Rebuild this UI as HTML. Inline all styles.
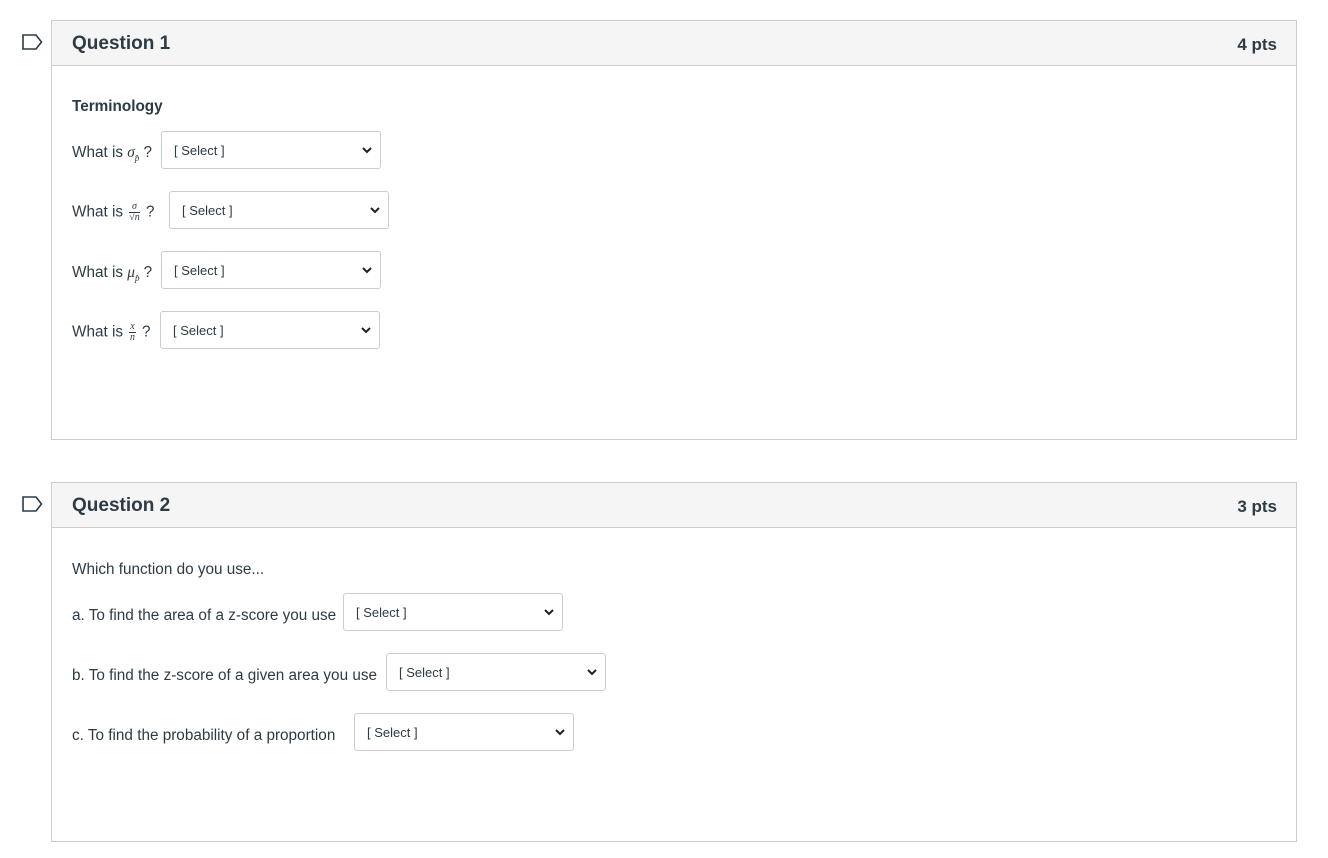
<!DOCTYPE html>
<html><head><meta charset="utf-8"><style>
body{margin:0;background:#fff;font-family:"Liberation Sans",sans-serif;color:#2d3b45;width:1328px;height:858px;position:relative;overflow:hidden}
.q{position:absolute;left:51px;width:1244px;border:1px solid #c7cdd1}
.h{height:44px;background:#f5f5f5;border-bottom:1px solid #c7cdd1;position:relative}
.h .t{position:absolute;left:20px;top:12px;font-size:19px;font-weight:bold}
.h .p{position:absolute;right:19px;top:14px;font-size:17px;font-weight:bold}
.a{position:absolute;font-size:15.3px}
.s{position:absolute;width:218px;height:36px;border:1px solid #c7cdd1;border-radius:3px;background:#fff;font-size:13px;box-sizing:content-box}
.s span{position:absolute;left:12px;top:11px}
.s svg{position:absolute;right:8px;top:15px}
.f{position:absolute;left:22px}
i{font-family:"Liberation Serif",serif}
.fr{display:inline-block;vertical-align:middle;text-align:center;font-family:"Liberation Serif",serif;font-style:italic;font-size:10px;line-height:10px;margin:0 2px}
.fr b{display:block;font-weight:normal;border-bottom:1px solid #2d3b45;padding:0 1px}
</style></head><body>
<svg class="f" style="top:34px" width="21" height="16"><path d="M1 1H14L19.5 8L14 15H1Z" fill="none" stroke="#2d3b45" stroke-width="1.6"/></svg>
<svg class="f" style="top:496px" width="21" height="16"><path d="M1 1H14L19.5 8L14 15H1Z" fill="none" stroke="#2d3b45" stroke-width="1.6"/></svg>

<div class="q" style="top:20px;height:418px"><div class="h"><span class="t">Question 1</span><span class="p">4 pts</span></div></div>
<div class="q" style="top:482px;height:358px"><div class="h"><span class="t">Question 2</span><span class="p">3 pts</span></div></div>

<div class="a" style="left:72px;top:98px;font-weight:bold">Terminology</div>
<div class="a" style="left:72px;top:144px">What is <i>σ<sub style="font-size:9px">p̂</sub></i> ?</div>
<div class="a" style="left:72px;top:202px">What is <span class="fr"><b>σ</b>√n</span> ?</div>
<div class="a" style="left:72px;top:264px">What is <i>μ<sub style="font-size:9px">p̂</sub></i> ?</div>
<div class="a" style="left:72px;top:322px">What is <span class="fr"><b>x</b>n</span> ?</div>

<div class="s" style="left:161px;top:131px"><span>[ Select ]</span><svg width="10" height="7"><path d="M1 1L5 5L9 1" fill="none" stroke="#222" stroke-width="2"/></svg></div>
<div class="s" style="left:169px;top:191px"><span>[ Select ]</span><svg width="10" height="7"><path d="M1 1L5 5L9 1" fill="none" stroke="#222" stroke-width="2"/></svg></div>
<div class="s" style="left:161px;top:251px"><span>[ Select ]</span><svg width="10" height="7"><path d="M1 1L5 5L9 1" fill="none" stroke="#222" stroke-width="2"/></svg></div>
<div class="s" style="left:160px;top:311px"><span>[ Select ]</span><svg width="10" height="7"><path d="M1 1L5 5L9 1" fill="none" stroke="#222" stroke-width="2"/></svg></div>

<div class="a" style="left:72px;top:561px">Which function do you use...</div>
<div class="a" style="left:72px;top:607px">a. To find the area of a z-score you use</div>
<div class="a" style="left:72px;top:667px">b. To find the z-score of a given area you use</div>
<div class="a" style="left:72px;top:727px">c. To find the probability of a proportion</div>
<div class="s" style="left:343px;top:593px"><span>[ Select ]</span><svg width="10" height="7"><path d="M1 1L5 5L9 1" fill="none" stroke="#222" stroke-width="2"/></svg></div>
<div class="s" style="left:386px;top:653px"><span>[ Select ]</span><svg width="10" height="7"><path d="M1 1L5 5L9 1" fill="none" stroke="#222" stroke-width="2"/></svg></div>
<div class="s" style="left:354px;top:713px"><span>[ Select ]</span><svg width="10" height="7"><path d="M1 1L5 5L9 1" fill="none" stroke="#222" stroke-width="2"/></svg></div>
</body></html>
